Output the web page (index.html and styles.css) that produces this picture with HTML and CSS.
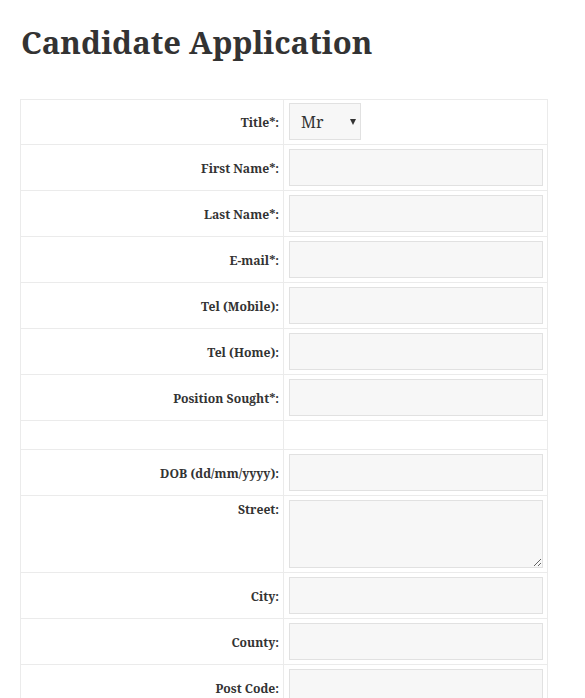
FILE: index.html
```html
<!DOCTYPE html>
<html>
<head>
<meta charset="utf-8">
<link rel="stylesheet" href="styles.css">
</head>
<body>
<div class="page">
  <h1 class="title">Candidate Application</h1>
  <table class="form">
    <tr>
      <td class="lbl">Title*:</td>
      <td class="fld">
        <span class="sel-wrap">
          <select class="sel"><option>Mr</option><option>Mrs</option><option>Ms</option></select>
          <span class="arrow"></span>
        </span>
      </td>
    </tr>
    <tr><td class="lbl">First Name*:</td><td class="fld"><input class="inp" type="text"></td></tr>
    <tr><td class="lbl">Last Name*:</td><td class="fld"><input class="inp" type="text"></td></tr>
    <tr><td class="lbl">E-mail*:</td><td class="fld"><input class="inp" type="text"></td></tr>
    <tr><td class="lbl">Tel (Mobile):</td><td class="fld"><input class="inp" type="text"></td></tr>
    <tr><td class="lbl">Tel (Home):</td><td class="fld"><input class="inp" type="text"></td></tr>
    <tr><td class="lbl">Position Sought*:</td><td class="fld"><input class="inp" type="text"></td></tr>
    <tr class="spacer"><td><div class="sp"></div></td><td><div class="sp"></div></td></tr>
    <tr><td class="lbl">DOB (dd/mm/yyyy):</td><td class="fld"><input class="inp" type="text"></td></tr>
    <tr><td class="lbl top">Street:</td><td class="fld"><textarea class="ta"></textarea></td></tr>
    <tr><td class="lbl">City:</td><td class="fld"><input class="inp" type="text"></td></tr>
    <tr><td class="lbl">County:</td><td class="fld"><input class="inp" type="text"></td></tr>
    <tr><td class="lbl">Post Code:</td><td class="fld"><input class="inp" type="text"></td></tr>
  </table>
</div>
</body>
</html>
```

FILE: styles.css
```css
html, body {
  margin: 0;
  padding: 0;
  background: #fff;
}
body {
  font-family: "Noto Serif", "DejaVu Serif", serif;
  color: #333;
}
.page {
  padding: 0 0 0 20px;
  width: 528px;
}
.title {
  margin: 0;
  padding: 22px 0 0 1px;
  height: 99px;
  box-sizing: border-box;
  font-size: 31px;
  line-height: 40px;
  font-weight: 700;
  color: #333;
}
.form {
  width: 528px;
  border-collapse: separate;
  border-spacing: 0;
  border-top: 1px solid #ebebeb;
  border-left: 1px solid #ebebeb;
  table-layout: fixed;
}
.form td {
  border-right: 1px solid #ebebeb;
  border-bottom: 1px solid #ebebeb;
  padding: 4px 4px 4px 5px;
  vertical-align: middle;
}
.form td.lbl {
  width: 253px;
  text-align: right;
  font-size: 12.2px;
  font-weight: 700;
  padding-top: 5px;
  padding-bottom: 3px;
  padding-right: 4px;
  line-height: 18px;
}
.form td.lbl.top {
  vertical-align: top;
  padding-top: 5px;
}
.fld {
  line-height: 0;
}
.inp {
  display: block;
  box-sizing: border-box;
  width: 254px;
  height: 37px;
  margin: 0;
  background: #f7f7f7;
  border: 1px solid #e1e1e1;
  border-radius: 0;
  outline: none;
  padding: 0 8px;
  font: 14px "Noto Serif", "DejaVu Serif", serif;
}
.ta {
  display: block;
  box-sizing: border-box;
  width: 254px;
  height: 68px;
  margin: 0;
  background: #f7f7f7;
  border: 1px solid #e1e1e1;
  border-radius: 0;
  outline: none;
  padding: 6px 8px;
  font: 14px "Noto Serif", "DejaVu Serif", serif;
  resize: vertical;
}
.sel-wrap {
  position: relative;
  display: inline-block;
  line-height: 0;
}
.sel {
  -webkit-appearance: none;
  appearance: none;
  display: block;
  box-sizing: border-box;
  width: 72px;
  height: 37px;
  margin: -1px 0 0 0;
  padding: 0 0 0 11px;
  background: #f7f7f7;
  border: 1px solid #e1e1e1;
  border-radius: 0;
  color: #333;
  font: 16px "Noto Serif", "DejaVu Serif", serif;
  outline: none;
}
.arrow {
  position: absolute;
  right: 5px;
  top: 15px;
  width: 0;
  height: 0;
  border-left: 3.5px solid transparent;
  border-right: 3.5px solid transparent;
  border-top: 6px solid #333;
  pointer-events: none;
}
.spacer td {
  padding: 0;
}
.sp {
  height: 28px;
}
```
